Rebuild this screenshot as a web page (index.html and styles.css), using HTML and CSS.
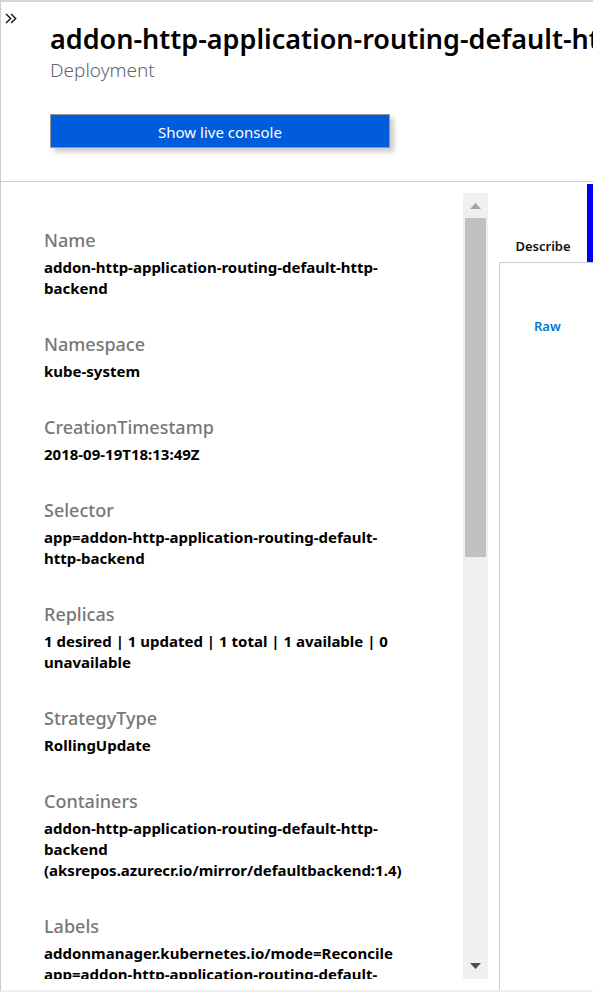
FILE: index.html
```html
<!DOCTYPE html>
<html lang="en">
<head>
<meta charset="utf-8">
<meta name="viewport" content="width=device-width, initial-scale=1">
<title>Deployment</title>
<link rel="stylesheet" href="styles.css">
</head>
<body>
<div class="blade">
  <header class="header">
    <button class="expand" aria-label="Expand">
      <svg width="12" height="12" viewBox="0 0 12 12" fill="none" stroke="#111" stroke-width="1.4"><path d="M1 1l4.700 4.500L1 10M6 1l4.700 4.500L6 10"/></svg>
    </button>
    <div class="heading">
      <h1 class="title">addon-http-application-routing-default-http-backend</h1>
      <p class="kind">Deployment</p>
      <button class="console">Show live console</button>
    </div>
  </header>
  <main class="content">
    <section class="side">
      <dl class="details">
        <div class="item"><dt>Name</dt><dd>addon-http-application-routing-default-http-<br>backend</dd></div>
        <div class="item"><dt>Namespace</dt><dd>kube-system</dd></div>
        <div class="item"><dt>CreationTimestamp</dt><dd>2018-09-19T18:13:49Z</dd></div>
        <div class="item"><dt>Selector</dt><dd>app=addon-http-application-routing-default-<br>http-backend</dd></div>
        <div class="item"><dt>Replicas</dt><dd>1 desired | 1 updated | 1 total | 1 available | 0<br>unavailable</dd></div>
        <div class="item"><dt>StrategyType</dt><dd>RollingUpdate</dd></div>
        <div class="item"><dt>Containers</dt><dd>addon-http-application-routing-default-http-<br>backend<br>(aksrepos.azurecr.io/mirror/defaultbackend:1.4)</dd></div>
        <div class="item"><dt>Labels</dt><dd>addonmanager.kubernetes.io/mode=Reconcile<br>app=addon-http-application-routing-default-</dd></div>
      </dl>
      <div class="scrollbar">
        <svg class="arrow" viewBox="0 0 25 25"><path d="M7 16h11l-5.500-6z" fill="#a3a3a3"/></svg>
        <div class="track"><div class="thumb"></div></div>
        <svg class="arrow" viewBox="0 0 25 25"><path d="M7 9h11l-5.500 6z" fill="#505050"/></svg>
      </div>
    </section>
    <section class="panel">
      <nav class="tabs">
        <button class="tab">Describe</button>
        <button class="tab next" aria-label="Next tab"></button>
      </nav>
      <div class="body"><a class="raw" href="#raw">Raw</a></div>
    </section>
  </main>
</div>
</body>
</html>
```
FILE: styles.css
```css
* { box-sizing: border-box; margin: 0; }
body {
  background: #fff;
  color: #000;
  font-family: "Noto Sans", "Open Sans", sans-serif;
  overflow: hidden;
}
button { font-family: inherit; cursor: pointer; border-radius: 0; }
.blade {
  display: flex;
  flex-direction: column;
  height: 100vh;
  border-top: 2px solid #d8d8d8;
  border-left: 1px solid #ccc;
  border-bottom: 2px solid #efefef;
}
.header {
  display: flex;
  align-items: flex-start;
  flex: none;
  height: 180px;
  border-bottom: 1px solid #ccc;
}
.expand {
  flex: none;
  width: 49px;
  padding: 11px 0 0 4px;
  border: 0;
  background: none;
  text-align: left;
  line-height: 0;
}
.heading { flex: 1; min-width: 0; padding-top: 19px; }
.title {
  font-size: 27px;
  line-height: 36px;
  font-weight: 600;
  white-space: nowrap;
  overflow: hidden;
}
.kind { font-size: 19px; line-height: 26px; font-weight: 300; color: #666; }
.console {
  display: block;
  width: 340px;
  height: 34px;
  margin-top: 31px;
  padding: 2px 0 0;
  border: 1px solid #999;
  background: #005cdb;
  color: #fff;
  font-size: 15px;
  box-shadow: 4px 4px 5px #ccc;
}
.content { display: flex; flex: 1; min-height: 0; }
.side {
  display: flex;
  flex: none;
  width: 498px;
  padding: 11px 11px 11px 43px;
}
.details { flex: 1; min-width: 0; overflow: hidden; padding-top: 35px; }
.item { margin-bottom: 33px; }
dt { margin-bottom: 4px; font-size: 18px; line-height: 25px; font-weight: 500; color: #777; }
dd { font-size: 15px; line-height: 21px; font-weight: 700; white-space: nowrap; }
.scrollbar {
  display: flex;
  flex-direction: column;
  flex: none;
  width: 25px;
  background: #f0f0f0;
}
.arrow { display: block; flex: none; width: 25px; height: 25px; }
.track { flex: 1; padding: 0 2px; }
.thumb { height: 46%; background: #c1c1c1; }
.panel { display: flex; flex-direction: column; flex: 1; min-width: 0; }
.tabs { display: flex; flex: none; height: 81px; border-bottom: 1px solid #ccc; overflow: hidden; }
.tab {
  flex: none;
  width: 88px;
  padding: 48px 0 0;
  border: 0;
  background: none;
  font-size: 13px;
  font-weight: 600;
  color: #111;
}
.next { background: #00f; margin-top: 2px; }
.body { flex: 1; border-left: 1px solid #ccc; padding: 51px 0 0 34px; }
.raw { font-size: 13px; line-height: 18px; font-weight: 600; color: #0078d7; text-decoration: none; }
```
